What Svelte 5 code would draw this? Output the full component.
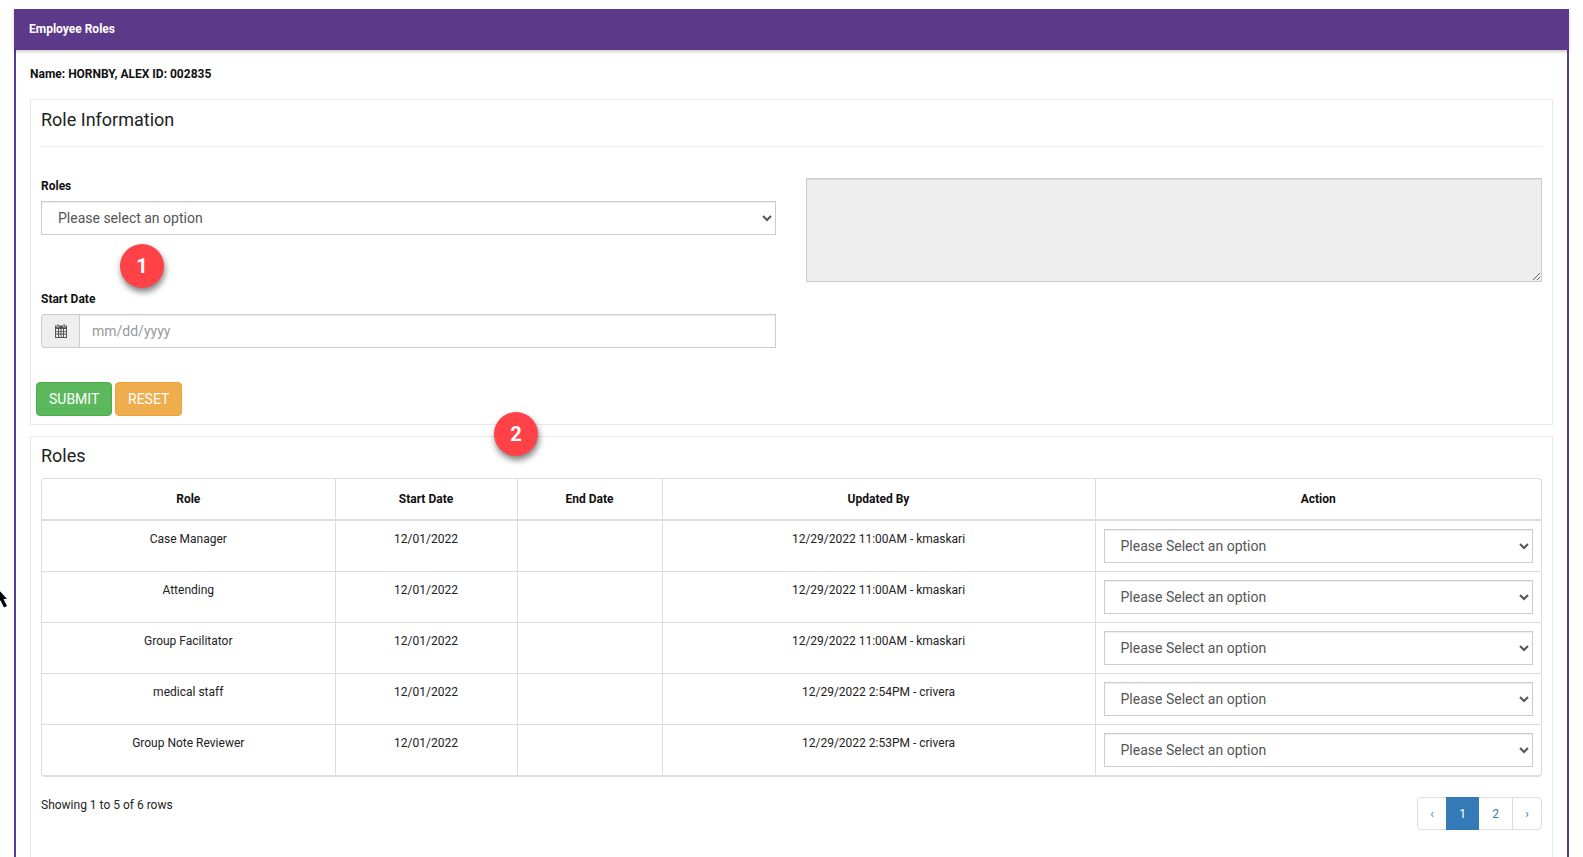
<script>
  const rows = [
    { role: 'Case Manager', start: '12/01/2022', end: '', updated: '12/29/2022 11:00AM - kmaskari' },
    { role: 'Attending', start: '12/01/2022', end: '', updated: '12/29/2022 11:00AM - kmaskari' },
    { role: 'Group Facilitator', start: '12/01/2022', end: '', updated: '12/29/2022 11:00AM - kmaskari' },
    { role: 'medical staff', start: '12/01/2022', end: '', updated: '12/29/2022 2:54PM - crivera' },
    { role: 'Group Note Reviewer', start: '12/01/2022', end: '', updated: '12/29/2022 2:53PM - crivera' }
  ];
</script>

<div class="page">
  <svg class="cursor" width="9" height="20" viewBox="0 0 9 20">
    <path d="M-3 0 L7 11 L3.5 11 L7 18 L4 19.5 L0.5 12.5 L-3 15 Z" fill="#000" />
  </svg>

  <div class="shell">
    <header class="bar">Employee Roles</header>
    <div class="who">Name: HORNBY, ALEX ID: 002835</div>

    <section class="panel info">
      <h2 class="title">Role Information</h2>
      <hr />
      <div class="form-grid">
        <div class="col">
          <label class="lbl" for="roles">Roles</label>
          <select id="roles" class="ctl">
            <option>Please select an option</option>
          </select>
          <label class="lbl second" for="start">Start Date</label>
          <div class="date-group">
            <span class="addon">
              <svg width="14" height="14" viewBox="0 0 14 14" fill="#555">
                <path d="M3 0.5h1.6v2H3zM9.4 0.5H11v2H9.4z" />
                <path fill-rule="evenodd" d="M1 1.6h1.5v1.6h2.6V1.6h3.8v1.6h2.6V1.6H13V14H1zM2 5v1.9h2V5zm3 0v1.9h1.5V5zm2.5 0v1.9H9V5zM10 5v1.9h2V5zM2 7.7v1.9h2V7.7zm3 0v1.9h1.5V7.7zm2.5 0v1.9H9V7.7zm2.5 0v1.9h2V7.7zM2 10.4v2.6h2v-2.6zm3 0v2.6h1.5v-2.6zm2.5 0v2.6H9v-2.6zm2.5 0v2.6h2v-2.6z" />
              </svg>
            </span>
            <input id="start" class="date" placeholder="mm/dd/yyyy" />
          </div>
        </div>
        <div class="col">
          <textarea class="notes" disabled></textarea>
        </div>
      </div>
      <div class="actions">
        <button class="btn green">SUBMIT</button>
        <button class="btn orange">RESET</button>
      </div>
    </section>

    <section class="panel list">
      <h2 class="title">Roles</h2>
      <div class="table-wrap">
        <table>
          <colgroup>
            <col style="width:293px" />
            <col style="width:182px" />
            <col style="width:145px" />
            <col style="width:433px" />
            <col />
          </colgroup>
          <thead>
            <tr>
              <th>Role</th>
              <th>Start Date</th>
              <th>End Date</th>
              <th>Updated By</th>
              <th>Action</th>
            </tr>
          </thead>
          <tbody>
            {#each rows as row}
              <tr>
                <td>{row.role}</td>
                <td>{row.start}</td>
                <td>{row.end}</td>
                <td>{row.updated}</td>
                <td class="act">
                  <select class="ctl">
                    <option>Please Select an option</option>
                  </select>
                </td>
              </tr>
            {/each}
          </tbody>
        </table>
      </div>
      <div class="foot">
        <span class="showing">Showing 1 to 5 of 6 rows</span>
        <nav class="pager">
          <a href="#prev" class="arrow">‹</a>
          <a href="#one" class="on">1</a>
          <a href="#two">2</a>
          <a href="#next" class="arrow">›</a>
        </nav>
      </div>
    </section>
  </div>

  <span class="pin pin-one">1</span>
  <span class="pin pin-two">2</span>
</div>

<style>
  :global(body) {
    background: #fff;
    overflow: hidden;
  }

  .page {
    position: relative;
    height: 857px;
    overflow: hidden;
    padding: 9px 14px 0;
    box-sizing: border-box;
    font-family: Roboto, "Liberation Sans", sans-serif;
    font-size: 12px;
    color: #222;
  }

  .cursor {
    position: absolute;
    left: 0;
    top: 588px;
  }

  .shell {
    height: 900px;
    border-left: 2px solid #5c3a8c;
    border-right: 2px solid #5c3a8c;
    padding: 0 14px;
    box-sizing: border-box;
  }

  .bar {
    height: 41px;
    margin: 0 -16px;
    background: #5c3989;
    color: #fff;
    font-size: 12px;
    font-weight: 700;
    line-height: 41px;
    padding-left: 15px;
    box-shadow: 0 2px 3px rgba(0, 0, 0, 0.2);
    position: relative;
  }

  .who {
    font-size: 12px;
    font-weight: 700;
    color: #111;
    line-height: 16px;
    margin-top: 16px;
    margin-bottom: 17px;
  }

  .panel {
    border: 1px solid #e7e7ec;
    padding: 0 10px;
    box-sizing: border-box;
  }

  .info {
    height: 326px;
    margin-bottom: 11px;
  }

  .title {
    margin: 0;
    font-size: 18px;
    font-weight: 400;
    color: #222;
    line-height: 20px;
    padding-top: 10px;
  }

  hr {
    border: none;
    border-top: 1px solid #eee;
    margin: 16px 0 0;
  }

  .form-grid {
    display: grid;
    grid-template-columns: 735px 736px;
    gap: 30px;
    padding-top: 31px;
  }

  .col {
    min-width: 0;
  }

  .lbl {
    display: block;
    font-weight: 700;
    font-size: 12px;
    color: #111;
    line-height: 16px;
    margin-bottom: 7px;
  }

  .second {
    margin-top: 56px;
  }

  .ctl {
    display: block;
    width: 100%;
    height: 34px;
    border: 1px solid #ccc;
    border-radius: 0;
    background-color: #fff;
    color: #555;
    font-family: inherit;
    font-size: 14px;
    padding: 0 12px;
    box-sizing: border-box;
    box-shadow: inset 0 1px 1px rgba(0, 0, 0, 0.075);
  }

  .date-group {
    display: flex;
    height: 34px;
  }

  .addon {
    width: 38px;
    box-sizing: border-box;
    border: 1px solid #ccc;
    border-right: none;
    border-radius: 4px 0 0 4px;
    background: #eee;
    display: flex;
    align-items: center;
    justify-content: center;
  }

  .date {
    flex: 1;
    min-width: 0;
    border: 1px solid #ccc;
    padding: 0 12px;
    font-family: inherit;
    font-size: 14px;
    color: #555;
    box-sizing: border-box;
    outline: none;
    box-shadow: inset 0 1px 1px rgba(0, 0, 0, 0.075);
  }

  .date::placeholder {
    color: #999;
    opacity: 1;
  }

  .notes {
    display: block;
    width: 100%;
    height: 104px;
    border: 1px solid #ccc;
    background: #eee;
    box-sizing: border-box;
    resize: vertical;
    box-shadow: inset 0 1px 1px rgba(0, 0, 0, 0.075);
  }

  .actions {
    display: flex;
    gap: 3px;
    margin-left: -5px;
    margin-top: 34px;
  }

  .btn {
    height: 34px;
    border-radius: 4px;
    border: 1px solid transparent;
    color: #fff;
    font-family: inherit;
    font-size: 14px;
    padding: 0 12px;
  }

  .green {
    background: #5cb85c;
    border-color: #4cae4c;
    width: 76px;
  }

  .orange {
    background: #f0ad4e;
    border-color: #eea236;
    width: 67px;
  }

  .list {
    height: 500px;
  }

  .list .title {
    padding-top: 9px;
  }

  .table-wrap {
    margin-top: 12px;
    border: 1px solid #ddd;
    border-bottom-width: 2px;
    border-radius: 4px;
    width: 1501px;
    box-sizing: border-box;
  }

  table {
    width: 100%;
    border-collapse: collapse;
    table-layout: fixed;
  }

  th,
  td {
    text-align: center;
    border-left: 1px solid #ddd;
    box-sizing: border-box;
  }

  th:first-child,
  td:first-child {
    border-left: none;
  }

  th {
    height: 41px;
    font-size: 12px;
    font-weight: 700;
    color: #111;
    border-bottom: 2px solid #ddd;
    padding: 0 8px;
  }

  td {
    height: 51px;
    font-size: 12px;
    color: #222;
    vertical-align: top;
    padding: 10px 8px 0;
    line-height: 16px;
    border-top: 1px solid #ddd;
  }

  tbody tr:first-child td {
    border-top: none;
  }

  td.act {
    padding: 8px 8px 0;
  }

  .foot {
    display: flex;
    justify-content: space-between;
    align-items: flex-start;
    width: 1501px;
    margin-top: 20px;
  }

  .showing {
    line-height: 16px;
    font-size: 12px;
    color: #222;
  }

  .pager {
    display: flex;
    height: 33px;
    border: 1px solid #ddd;
    border-radius: 4px;
    box-sizing: border-box;
  }

  .pager a {
    display: flex;
    align-items: center;
    justify-content: center;
    width: 33px;
    text-decoration: none;
    color: #337ab7;
    font-size: 12px;
  }

  .pager a.arrow {
    width: 28px;
  }

  .pager a:last-child {
    border-left: 1px solid #ddd;
  }

  .pager a.on {
    background: #337ab7;
    color: #fff;
    margin: -1px 0;
  }

  .pin {
    position: absolute;
    width: 44px;
    height: 44px;
    border-radius: 50%;
    background: #ff4248;
    color: #fff;
    font-size: 20px;
    font-weight: 700;
    display: flex;
    align-items: center;
    justify-content: center;
    box-shadow: 1px 4px 6px rgba(0, 0, 0, 0.5);
  }

  .pin-one {
    left: 120px;
    top: 244px;
  }

  .pin-two {
    left: 494px;
    top: 412px;
  }
</style>
